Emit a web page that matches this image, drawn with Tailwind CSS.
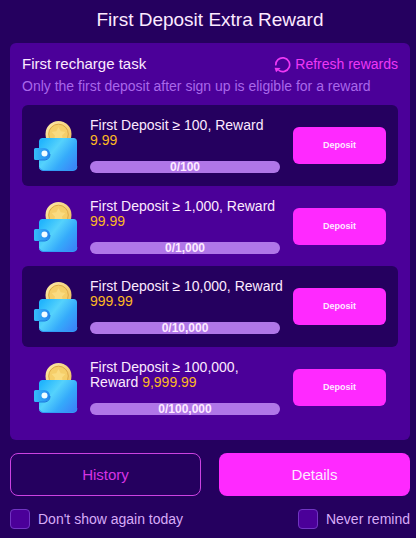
<!DOCTYPE html>
<html lang="en">
<head>
  <meta charset="UTF-8" />
  <meta name="viewport" content="width=device-width, initial-scale=1.0" />
  <title>First Deposit Extra Reward</title>
  <script src="https://cdn.jsdelivr.net/npm/@tailwindcss/browser@4"></script>
</head>
<body class="min-h-screen bg-[#25005f] pr-[6px] pb-2 pl-[10px] font-['Liberation_Sans',Arial,sans-serif] text-[14px] leading-[15px] text-[#fdeaff]">

  <!-- Shared wallet icon -->
  <svg class="absolute size-0" aria-hidden="true">
    <defs>
      <linearGradient id="leather" x1="0" y1="0.2" x2="1" y2="0.9">
        <stop offset="0" stop-color="#22b5fd" />
        <stop offset="0.35" stop-color="#55d2fc" />
        <stop offset="0.65" stop-color="#35aafb" />
        <stop offset="1" stop-color="#3b82f8" />
      </linearGradient>
      <linearGradient id="strap" x1="0" y1="0" x2="1" y2="0">
        <stop offset="0" stop-color="#35bdfc" />
        <stop offset="1" stop-color="#2585ee" />
      </linearGradient>
      <linearGradient id="gold" x1="0" y1="0" x2="1" y2="1">
        <stop offset="0" stop-color="#ffedac" />
        <stop offset="1" stop-color="#eeb955" />
      </linearGradient>
    </defs>
    <symbol id="wallet" viewBox="0 0 44 52">
      <circle cx="24.500" cy="14" r="13" fill="url(#gold)" />
      <circle cx="24.500" cy="14" r="9.800" fill="#f5ce69" stroke="#dda848" stroke-width="1" />
      <path d="M24.500 7l2.200 4.200 4.700.8-3.300 3.400.7 4.700-4.300-2-4.300 2 .7-4.700-3.300-3.400 4.700-.8z" fill="#fadb80" />
      <path d="M9 18h30.500a3.500 3.500 0 0 1 3.500 3.500v25a4 4 0 0 1-4 4H9a4 4 0 0 1-4-4V21.500A3.500 3.500 0 0 1 9 18z" fill="url(#leather)" />
      <path d="M5.500 47.500a4 4 0 0 0 3.500 3h30a4 4 0 0 0 4-4" fill="none" stroke="#329cf5" stroke-width="1" />
      <path d="M1.500 28H10a6 6 0 0 1 0 12H1.500A1.500 1.500 0 0 1 0 38.500v-9A1.500 1.500 0 0 1 1.500 28z" fill="url(#strap)" />
      <path d="M5 40h6a6 6 0 0 0 5-6" fill="none" stroke="#1f78dc" stroke-width="1" />
      <circle cx="10.500" cy="33.500" r="3" fill="#f2fdff" />
    </symbol>
  </svg>

  <h1 class="pt-2 pb-[11px] text-center text-[19px] leading-6">First Deposit Extra Reward</h1>

  <main>
    <section class="rounded-md bg-[#4b0099] px-3 pt-3 pb-[13px]">
      <div class="flex items-center justify-between">
        <h2 class="text-[15px] leading-[18px]">First recharge task</h2>
        <button class="flex items-center gap-1 text-[#ee38f5] leading-[18px]">
          <svg class="size-[17px]" viewBox="0 0 18 18" fill="none" aria-hidden="true">
            <path d="M2 10A7.300 7.300 0 1 1 4.800 15" stroke="currentColor" stroke-width="1.800" />
            <path d="M.600 12.400l6.400.2-4.800 4.600z" fill="currentColor" />
          </svg>
          Refresh rewards
        </button>
      </div>
      <p class="pt-1 pb-[10px] leading-[18px] text-[#a967ea]">Only the first deposit after sign up is eligible for a reward</p>

      <ul>
        <li class="flex items-center rounded-md bg-[#25005f] px-3 py-[13px]">
          <svg class="h-[52px] w-11 shrink-0" aria-hidden="true"><use href="#wallet" /></svg>
          <div class="ml-3 min-w-0 flex-1">
            <p class="-mr-2 min-h-[30px]">First Deposit ≥ 100, Reward <span class="block text-[#fdb823]">9.99</span></p>
            <div class="mt-[13px] h-3 rounded-full bg-[#b076e8] text-center text-[12px] leading-3 font-bold">0/100</div>
          </div>
          <button class="ml-[13px] h-[37px] w-[93px] shrink-0 rounded-md bg-[#ff29ff] text-[9px] font-bold">Deposit</button>
        </li>
        <li class="flex items-center rounded-md px-3 pt-[13px] pb-3">
          <svg class="h-[52px] w-11 shrink-0" aria-hidden="true"><use href="#wallet" /></svg>
          <div class="ml-3 min-w-0 flex-1">
            <p class="-mr-2 min-h-[30px]">First Deposit ≥ 1,000, Reward <span class="block text-[#fdb823]">99.99</span></p>
            <div class="mt-[13px] h-3 rounded-full bg-[#b076e8] text-center text-[12px] leading-3 font-bold">0/1,000</div>
          </div>
          <button class="ml-[13px] h-[37px] w-[93px] shrink-0 rounded-md bg-[#ff29ff] text-[9px] font-bold">Deposit</button>
        </li>
        <li class="flex items-center rounded-md bg-[#25005f] px-3 py-[13px]">
          <svg class="h-[52px] w-11 shrink-0" aria-hidden="true"><use href="#wallet" /></svg>
          <div class="ml-3 min-w-0 flex-1">
            <p class="-mr-2 min-h-[30px]">First Deposit ≥ 10,000, Reward <span class="block text-[#fdb823]">999.99</span></p>
            <div class="mt-[13px] h-3 rounded-full bg-[#b076e8] text-center text-[12px] leading-3 font-bold">0/10,000</div>
          </div>
          <button class="ml-[13px] h-[37px] w-[93px] shrink-0 rounded-md bg-[#ff29ff] text-[9px] font-bold">Deposit</button>
        </li>
        <li class="flex items-center rounded-md px-3 pt-[13px] pb-3">
          <svg class="h-[52px] w-11 shrink-0" aria-hidden="true"><use href="#wallet" /></svg>
          <div class="ml-3 min-w-0 flex-1">
            <p class="-mr-2 min-h-[30px]">First Deposit ≥ 100,000,<br />Reward <span class="text-[#fdb823]">9,999.99</span></p>
            <div class="mt-[13px] h-3 rounded-full bg-[#b076e8] text-center text-[12px] leading-3 font-bold">0/100,000</div>
          </div>
          <button class="ml-[13px] h-[37px] w-[93px] shrink-0 rounded-md bg-[#ff29ff] text-[9px] font-bold">Deposit</button>
        </li>
      </ul>
    </section>

    <div class="mt-[13px] grid grid-cols-2 gap-[18px] text-[15px]">
      <button class="h-[43px] rounded-lg border border-[#cb42e2] text-[#d733e4]">History</button>
      <button class="h-[43px] rounded-lg bg-[#ff29ff]">Details</button>
    </div>
  </main>

  <footer class="mt-[13px] flex items-center justify-between text-[#d8acf8]">
    <label class="flex items-center gap-2">
      <input type="checkbox" class="size-5 appearance-none rounded-sm border border-[#7134c2] bg-[#4b0099] checked:bg-[#ff29ff]" />
      Don't show again today
    </label>
    <label class="flex items-center gap-2">
      <input type="checkbox" class="size-5 appearance-none rounded-sm border border-[#7134c2] bg-[#4b0099] checked:bg-[#ff29ff]" />
      Never remind
    </label>
  </footer>

</body>
</html>
